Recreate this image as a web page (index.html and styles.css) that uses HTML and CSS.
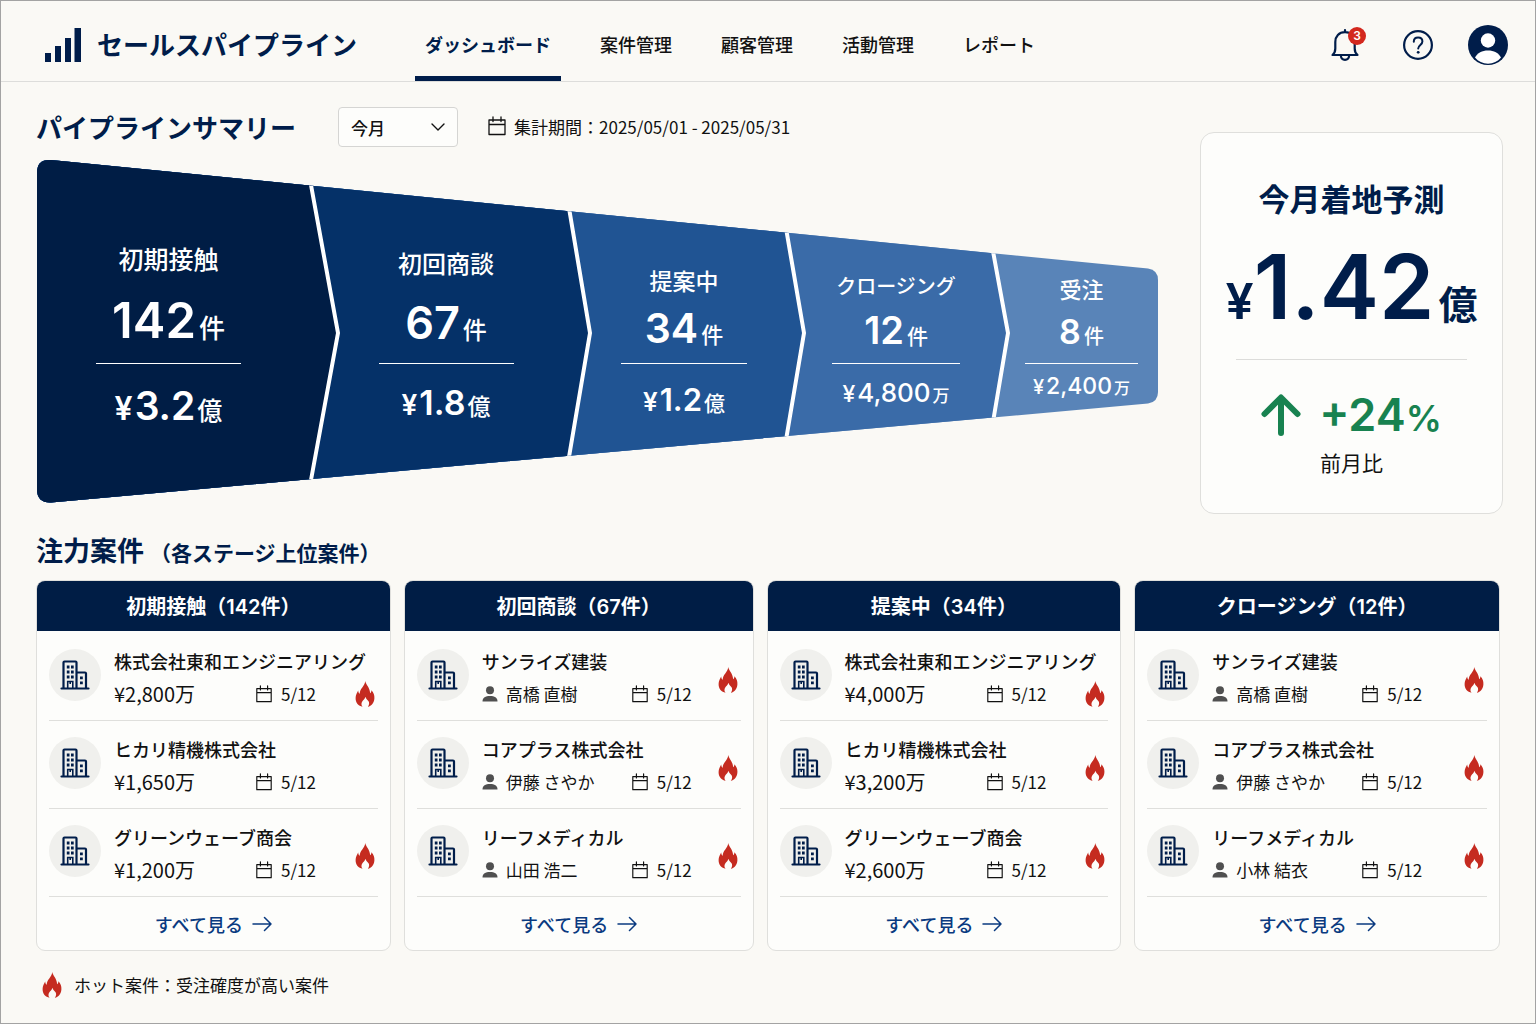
FILE: index.html
```html
<!DOCTYPE html>
<html lang="ja">

<head>
    <meta charset="UTF-8">
    <meta name="viewport" content="width=device-width, initial-scale=1.0">
    <title>セールスパイプライン</title>
    <link rel="stylesheet" href="styles.css">
</head>

<body>
    <!-- Shared icons -->
    <svg class="sprite" aria-hidden="true">
        <symbol id="icon-calendar" viewBox="0 0 20 20">
            <path d="M2 4h16v14.500H2zM2 8.500h16M6 1v4.500M14 1v4.500" fill="none" stroke="currentColor" stroke-width="1.300" stroke-linejoin="round" stroke-linecap="round" />
        </symbol>
        <symbol id="icon-person" viewBox="0 0 16 16">
            <circle cx="8" cy="4.200" r="4" fill="currentColor" />
            <path d="M.5 15.500C.5 11.500 3.500 10 8 10s7.500 1.500 7.500 5.500z" fill="currentColor" />
        </symbol>
        <symbol id="icon-building" viewBox="0 0 30 30">
            <path d="M3.500 28V2.500a1 1 0 0 1 1-1h11a1 1 0 0 1 1 1V28M16.500 12.500h8.500a1 1 0 0 1 1 1V28M1.500 28.500h27" fill="none" stroke="currentColor" stroke-width="2.200" stroke-linecap="round" />
            <path d="M6.800 5.500h2.700v3H6.800zM11 5.500h2.700v3H11zM6.800 10.500h2.700v3H6.800zM11 10.500h2.700v3H11zM6.800 15.500h2.700v3H6.800zM11 15.500h2.700v3H11zM20 16.500h2.800v2.800H20zM20 21.500h2.800v2.800H20z" fill="currentColor" />
            <path d="M7.700 28v-6.500h5.100V28M10.200 21.500V24" fill="none" stroke="currentColor" stroke-width="1.600" />
        </symbol>
        <symbol id="icon-fire" viewBox="0 0 20 26">
            <path d="M10.200 0C10.700 3.500 15 6.500 15.100 12.200c.9-.6 1.300-1.600 1.300-3 2.200 2.300 3.200 5 3 8-.3 4.800-2.800 7.600-6.600 8.600 1.400-1.600 1.700-3.600.9-5.200-.8-1.700-2.800-2.300-3.300-4.800-.4 2.200-2.300 3.200-3.300 4.900-1 1.800-.8 3.600.5 5.100C3.500 24.900.5 22 .6 17c0-3 1.400-5.200 2.600-7.500.1 1.500.5 2.600 1.500 3.200C4.700 7.500 9.800 5.500 10.200 0z" fill="currentColor" />
        </symbol>
        <symbol id="icon-arrow" viewBox="0 0 20 16">
            <path d="M1 8h18M12.500 1.500L19 8l-6.500 6.500" fill="none" stroke="currentColor" stroke-width="1.500" stroke-linecap="round" stroke-linejoin="round" />
        </symbol>
    </svg>

    <header class="header">
        <a class="brand" href="#">
            <svg class="brand-icon" viewBox="0 0 36 34" aria-hidden="true">
                <path d="M0 25h6v9H0zM10 18h6v16h-6zM20 10h6v24h-6zM29.500 0h6.500v34h-6.500z" fill="currentColor" />
            </svg>
            <span>セールスパイプライン</span>
        </a>
        <nav class="nav">
            <a class="nav-link active" href="#">ダッシュボード</a>
            <a class="nav-link" href="#">案件管理</a>
            <a class="nav-link" href="#">顧客管理</a>
            <a class="nav-link" href="#">活動管理</a>
            <a class="nav-link" href="#">レポート</a>
        </nav>
        <div class="tools">
            <button class="icon-button" type="button" aria-label="通知">
                <svg class="bell" viewBox="0 0 30 34" aria-hidden="true">
                    <path d="M2.500 27h25c-2-1.700-2.800-3.500-2.800-6.500V14c0-5.500-3.600-9.800-9.700-9.800S5.300 8.500 5.300 14v6.500c0 3-.8 4.800-2.800 6.500zM10.800 27.500c.3 2.800 2 4.300 4.200 4.300s3.900-1.500 4.200-4.300M15 4V2" fill="none" stroke="currentColor" stroke-width="2.200" stroke-linecap="round" stroke-linejoin="round" />
                </svg>
                <span class="badge">3</span>
            </button>
            <button class="icon-button" type="button" aria-label="ヘルプ">
                <svg class="help" viewBox="0 0 30 30" aria-hidden="true">
                    <circle cx="15" cy="15" r="13.900" fill="none" stroke="currentColor" stroke-width="2.200" />
                    <path d="M10.800 11.800c0-2.600 1.800-4.200 4.300-4.200s4.300 1.600 4.300 3.900c0 3.400-4.200 3.500-4.200 7.100" fill="none" stroke="currentColor" stroke-width="2" stroke-linecap="round" />
                    <circle cx="15.200" cy="22.300" r="1.400" fill="currentColor" />
                </svg>
            </button>
            <button class="icon-button" type="button" aria-label="アカウント">
                <svg class="avatar" viewBox="0 0 40 40" aria-hidden="true">
                    <circle cx="20" cy="20" r="20" fill="currentColor" />
                    <circle cx="20" cy="15.500" r="7.200" fill="#fff" />
                    <path d="M7 32.500c2.500-4.500 7-7 13-7s10.500 2.500 13 7c-3.300 4-7.700 6.200-13 6.200S10.300 36.500 7 32.500z" fill="#fff" />
                </svg>
            </button>
        </div>
    </header>

    <main class="main">
        <section class="summary">
            <div class="pipeline">
                <div class="pipeline-head">
                    <h1>パイプラインサマリー</h1>
                    <div class="select">
                        <select aria-label="期間">
                            <option>今月</option>
                            <option>先月</option>
                        </select>
                        <svg class="chevron" viewBox="0 0 14 8" aria-hidden="true">
                            <path d="M1 1l6 6 6-6" fill="none" stroke="currentColor" stroke-width="1.400" stroke-linecap="round" stroke-linejoin="round" />
                        </svg>
                    </div>
                    <p class="period">
                        <svg class="icon-period" aria-hidden="true"><use href="#icon-calendar" /></svg>
                        <span>集計期間：2025/05/01 - 2025/05/31</span>
                    </p>
                </div>

                <div class="funnel">
                    <svg class="funnel-shape" viewBox="0 0 1122 344" preserveAspectRatio="none" aria-hidden="true">
                        <clipPath id="funnel-clip">
                            <path d="M15 1L1112 109.500Q1122 111 1122 121V233Q1122 243 1112 244.500L15 343.500Q1 344 1 330V14Q1 0 15 1z" />
                        </clipPath>
                        <g clip-path="url(#funnel-clip)">
                            <path d="M0 0H1122V344H0z" fill="#5984b8" />
                            <path d="M0 0H942L957.500 95 972 174 957.500 260 943 344H0z" fill="#3a6ba8" />
                            <path d="M0 0H739L751 75 768 174 750.500 278 739 344H0z" fill="#205493" />
                            <path d="M0 0H525L533.500 52 554 174 533 298 525 344H0z" fill="#053168" />
                            <path d="M0 0H270.500L275 26 302 174 275 321 270.500 344H0z" fill="#001d45" />
                            <path d="M270.500 0L275 26 302 174 275 321 270.500 344M525 0L533.500 52 554 174 533 298 525 344M739 0L751 75 768 174 750.500 278 739 344M942 0L957.500 95 972 174 957.500 260 943 344" fill="none" stroke="#fff" stroke-width="4" />
                        </g>
                    </svg>
                    <ol class="stages">
                        <li class="stage stage-1">
                            <div class="stage-top">
                                <h2>初期接触</h2>
                                <p class="count">142<small>件</small></p>
                            </div>
                            <p class="amount"><i>¥</i>3.2<small>億</small></p>
                        </li>
                        <li class="stage stage-2">
                            <div class="stage-top">
                                <h2>初回商談</h2>
                                <p class="count">67<small>件</small></p>
                            </div>
                            <p class="amount"><i>¥</i>1.8<small>億</small></p>
                        </li>
                        <li class="stage stage-3">
                            <div class="stage-top">
                                <h2>提案中</h2>
                                <p class="count">34<small>件</small></p>
                            </div>
                            <p class="amount"><i>¥</i>1.2<small>億</small></p>
                        </li>
                        <li class="stage stage-4">
                            <div class="stage-top">
                                <h2>クロージング</h2>
                                <p class="count">12<small>件</small></p>
                            </div>
                            <p class="amount"><i>¥</i>4,800<small>万</small></p>
                        </li>
                        <li class="stage stage-5">
                            <div class="stage-top">
                                <h2>受注</h2>
                                <p class="count">8<small>件</small></p>
                            </div>
                            <p class="amount"><i>¥</i>2,400<small>万</small></p>
                        </li>
                    </ol>
                </div>
            </div>

            <aside class="forecast">
                <h2>今月着地予測</h2>
                <p class="forecast-value"><i>¥</i>1.42<small>億</small></p>
                <hr>
                <p class="trend">
                    <svg class="trend-arrow" viewBox="0 0 40 42" aria-hidden="true">
                        <path d="M20 39V4M3.500 20L20 3.500 36.500 20" fill="none" stroke="currentColor" stroke-width="6" stroke-linecap="round" stroke-linejoin="round" />
                    </svg>
                    <span>+24<small>%</small></span>
                </p>
                <p class="trend-label">前月比</p>
            </aside>
        </section>

        <section class="focus">
            <h2 class="focus-title">注力案件<small>（各ステージ上位案件）</small></h2>

            <div class="cards">
                <article class="card">
                    <h3>初期接触（142件）</h3>
                    <ul class="deals">
                        <li class="deal deal-long">
                            <span class="deal-icon"><svg aria-hidden="true"><use href="#icon-building" /></svg></span>
                            <div class="deal-body">
                                <h4>株式会社東和エンジニアリング</h4>
                                <div class="deal-meta">
                                    <span class="price">¥2,800万</span>
                                    <span class="date"><svg aria-hidden="true"><use href="#icon-calendar" /></svg>5/12</span>
                                </div>
                            </div>
                            <svg class="fire" aria-label="ホット案件"><use href="#icon-fire" /></svg>
                        </li>
                        <li class="deal">
                            <span class="deal-icon"><svg aria-hidden="true"><use href="#icon-building" /></svg></span>
                            <div class="deal-body">
                                <h4>ヒカリ精機株式会社</h4>
                                <div class="deal-meta">
                                    <span class="price">¥1,650万</span>
                                    <span class="date"><svg aria-hidden="true"><use href="#icon-calendar" /></svg>5/12</span>
                                </div>
                            </div>
                        </li>
                        <li class="deal">
                            <span class="deal-icon"><svg aria-hidden="true"><use href="#icon-building" /></svg></span>
                            <div class="deal-body">
                                <h4>グリーンウェーブ商会</h4>
                                <div class="deal-meta">
                                    <span class="price">¥1,200万</span>
                                    <span class="date"><svg aria-hidden="true"><use href="#icon-calendar" /></svg>5/12</span>
                                </div>
                            </div>
                            <svg class="fire" aria-label="ホット案件"><use href="#icon-fire" /></svg>
                        </li>
                    </ul>
                    <a class="more" href="#">すべて見る<svg aria-hidden="true"><use href="#icon-arrow" /></svg></a>
                </article>

                <article class="card card-people">
                    <h3>初回商談（67件）</h3>
                    <ul class="deals">
                        <li class="deal">
                            <span class="deal-icon"><svg aria-hidden="true"><use href="#icon-building" /></svg></span>
                            <div class="deal-body">
                                <h4>サンライズ建装</h4>
                                <div class="deal-meta">
                                    <span class="person"><svg aria-hidden="true"><use href="#icon-person" /></svg>高橋 直樹</span>
                                    <span class="date"><svg aria-hidden="true"><use href="#icon-calendar" /></svg>5/12</span>
                                </div>
                            </div>
                            <svg class="fire" aria-label="ホット案件"><use href="#icon-fire" /></svg>
                        </li>
                        <li class="deal">
                            <span class="deal-icon"><svg aria-hidden="true"><use href="#icon-building" /></svg></span>
                            <div class="deal-body">
                                <h4>コアプラス株式会社</h4>
                                <div class="deal-meta">
                                    <span class="person"><svg aria-hidden="true"><use href="#icon-person" /></svg>伊藤 さやか</span>
                                    <span class="date"><svg aria-hidden="true"><use href="#icon-calendar" /></svg>5/12</span>
                                </div>
                            </div>
                            <svg class="fire" aria-label="ホット案件"><use href="#icon-fire" /></svg>
                        </li>
                        <li class="deal">
                            <span class="deal-icon"><svg aria-hidden="true"><use href="#icon-building" /></svg></span>
                            <div class="deal-body">
                                <h4>リーフメディカル</h4>
                                <div class="deal-meta">
                                    <span class="person"><svg aria-hidden="true"><use href="#icon-person" /></svg>山田 浩二</span>
                                    <span class="date"><svg aria-hidden="true"><use href="#icon-calendar" /></svg>5/12</span>
                                </div>
                            </div>
                            <svg class="fire" aria-label="ホット案件"><use href="#icon-fire" /></svg>
                        </li>
                    </ul>
                    <a class="more" href="#">すべて見る<svg aria-hidden="true"><use href="#icon-arrow" /></svg></a>
                </article>

                <article class="card">
                    <h3>提案中（34件）</h3>
                    <ul class="deals">
                        <li class="deal deal-long">
                            <span class="deal-icon"><svg aria-hidden="true"><use href="#icon-building" /></svg></span>
                            <div class="deal-body">
                                <h4>株式会社東和エンジニアリング</h4>
                                <div class="deal-meta">
                                    <span class="price">¥4,000万</span>
                                    <span class="date"><svg aria-hidden="true"><use href="#icon-calendar" /></svg>5/12</span>
                                </div>
                            </div>
                            <svg class="fire" aria-label="ホット案件"><use href="#icon-fire" /></svg>
                        </li>
                        <li class="deal">
                            <span class="deal-icon"><svg aria-hidden="true"><use href="#icon-building" /></svg></span>
                            <div class="deal-body">
                                <h4>ヒカリ精機株式会社</h4>
                                <div class="deal-meta">
                                    <span class="price">¥3,200万</span>
                                    <span class="date"><svg aria-hidden="true"><use href="#icon-calendar" /></svg>5/12</span>
                                </div>
                            </div>
                            <svg class="fire" aria-label="ホット案件"><use href="#icon-fire" /></svg>
                        </li>
                        <li class="deal">
                            <span class="deal-icon"><svg aria-hidden="true"><use href="#icon-building" /></svg></span>
                            <div class="deal-body">
                                <h4>グリーンウェーブ商会</h4>
                                <div class="deal-meta">
                                    <span class="price">¥2,600万</span>
                                    <span class="date"><svg aria-hidden="true"><use href="#icon-calendar" /></svg>5/12</span>
                                </div>
                            </div>
                            <svg class="fire" aria-label="ホット案件"><use href="#icon-fire" /></svg>
                        </li>
                    </ul>
                    <a class="more" href="#">すべて見る<svg aria-hidden="true"><use href="#icon-arrow" /></svg></a>
                </article>

                <article class="card card-people">
                    <h3>クロージング（12件）</h3>
                    <ul class="deals">
                        <li class="deal">
                            <span class="deal-icon"><svg aria-hidden="true"><use href="#icon-building" /></svg></span>
                            <div class="deal-body">
                                <h4>サンライズ建装</h4>
                                <div class="deal-meta">
                                    <span class="person"><svg aria-hidden="true"><use href="#icon-person" /></svg>高橋 直樹</span>
                                    <span class="date"><svg aria-hidden="true"><use href="#icon-calendar" /></svg>5/12</span>
                                </div>
                            </div>
                            <svg class="fire" aria-label="ホット案件"><use href="#icon-fire" /></svg>
                        </li>
                        <li class="deal">
                            <span class="deal-icon"><svg aria-hidden="true"><use href="#icon-building" /></svg></span>
                            <div class="deal-body">
                                <h4>コアプラス株式会社</h4>
                                <div class="deal-meta">
                                    <span class="person"><svg aria-hidden="true"><use href="#icon-person" /></svg>伊藤 さやか</span>
                                    <span class="date"><svg aria-hidden="true"><use href="#icon-calendar" /></svg>5/12</span>
                                </div>
                            </div>
                            <svg class="fire" aria-label="ホット案件"><use href="#icon-fire" /></svg>
                        </li>
                        <li class="deal">
                            <span class="deal-icon"><svg aria-hidden="true"><use href="#icon-building" /></svg></span>
                            <div class="deal-body">
                                <h4>リーフメディカル</h4>
                                <div class="deal-meta">
                                    <span class="person"><svg aria-hidden="true"><use href="#icon-person" /></svg>小林 結衣</span>
                                    <span class="date"><svg aria-hidden="true"><use href="#icon-calendar" /></svg>5/12</span>
                                </div>
                            </div>
                            <svg class="fire" aria-label="ホット案件"><use href="#icon-fire" /></svg>
                        </li>
                    </ul>
                    <a class="more" href="#">すべて見る<svg aria-hidden="true"><use href="#icon-arrow" /></svg></a>
                </article>
            </div>

            <p class="legend">
                <svg class="fire" aria-hidden="true"><use href="#icon-fire" /></svg>
                <span>ホット案件：受注確度が高い案件</span>
            </p>
        </section>
    </main>
</body>

</html>
```
FILE: styles.css
```css
* {
    box-sizing: border-box;
    margin: 0;
    padding: 0;
}

body {
    min-height: 100vh;
    border: 1px solid #a3a3a3;
    background-color: #faf9f5;
    color: #111;
    font-family: "Noto Sans CJK JP", sans-serif;
    font-size: 17px;
}

a {
    color: inherit;
    text-decoration: none;
}

ul,
ol {
    list-style: none;
}

i {
    font-style: normal;
}

svg {
    display: block;
    flex-shrink: 0;
}

.sprite {
    display: none;
}

/* Header */
.header {
    display: flex;
    align-items: center;
    height: 81px;
    padding: 0 27px 0 44px;
    border-bottom: 1px solid #dddddb;
    color: #001d4a;
}

.brand {
    display: flex;
    align-items: center;
    gap: 16px;
    margin-top: 6px;
    font-size: 26px;
    font-weight: 600;
    line-height: 40px;
}

.brand-icon {
    width: 36px;
    height: 34px;
    margin-top: 2px;
}

.nav {
    display: flex;
    gap: 29px;
    height: 100%;
    margin-left: 58px;
}

.nav-link {
    padding: 0 10px;
    border-bottom: 5px solid transparent;
    color: #111;
    font-size: 18px;
    font-weight: 500;
    line-height: 86px;
    white-space: nowrap;
}

.nav-link.active {
    border-bottom-color: #001d4a;
    color: #001d4a;
    font-weight: 600;
}

.tools {
    display: flex;
    align-items: center;
    gap: 35px;
    margin-left: auto;
    padding-top: 7px;
}

.icon-button {
    position: relative;
    border: none;
    background: none;
    color: #001d4a;
    cursor: pointer;
}

.bell {
    width: 30px;
    height: 34px;
}

.help {
    width: 30px;
    height: 30px;
    margin-left: 8px;
}

.avatar {
    width: 40px;
    height: 40px;
}

.badge {
    position: absolute;
    top: -1px;
    right: -6px;
    width: 18px;
    height: 18px;
    border-radius: 50%;
    background-color: #d3281e;
    color: #fff;
    font: 600 12px/18px Inter, sans-serif;
    text-align: center;
}

/* Summary */
.main {
    padding: 25px 32px 20px 35px;
}

.summary {
    display: grid;
    grid-template-columns: 1fr 303px;
    gap: 42px;
    align-items: start;
}

.pipeline-head {
    display: flex;
    align-items: center;
    height: 40px;
    margin-bottom: 12px;
}

.pipeline-head h1 {
    color: #001d4a;
    font-size: 26px;
    font-weight: 600;
    line-height: 40px;
}

.select {
    display: grid;
    align-items: center;
    width: 120px;
    height: 40px;
    margin: 0 29px 0 42px;
}

.select select,
.select .chevron {
    grid-area: 1 / 1;
}

.select select {
    height: 40px;
    padding: 0 12px;
    border: 1px solid #d5d5d3;
    border-radius: 4px;
    background-color: #fdfdfb;
    color: #111;
    font: 500 17px "Noto Sans CJK JP", sans-serif;
    appearance: none;
}

.chevron {
    justify-self: end;
    width: 14px;
    height: 8px;
    margin-right: 13px;
    pointer-events: none;
}

.period {
    display: flex;
    align-items: center;
    gap: 7px;
    padding-bottom: 2px;
    white-space: nowrap;
}

.icon-period {
    width: 20px;
    height: 20px;
}

.funnel {
    display: grid;
}

.funnel-shape,
.stages {
    grid-area: 1 / 1;
    width: 100%;
    height: 344px;
}

/* columns follow the slice widths of the funnel shape */
.stages {
    display: grid;
    grid-template-columns: 275fr 258fr 218fr 206fr 165fr;
    color: #fff;
    font-family: Inter, "Noto Sans CJK JP", sans-serif;
}

.stage {
    display: flex;
    flex-direction: column;
    align-items: center;
    padding-left: 12px;
    line-height: 1;
}

.stage-top {
    display: flex;
    flex-direction: column;
    align-items: center;
    justify-content: flex-end;
    gap: 14px;
    width: 126px;
    height: 205px;
    padding-bottom: 14px;
    border-bottom: 1px solid #fff;
    white-space: nowrap;
}

.stage h2 {
    font-weight: 500;
}

.count {
    font-weight: 600;
}

.count small {
    margin-left: 3px;
    font-weight: 500;
}

.amount {
    font-weight: 600;
    white-space: nowrap;
}

.amount i {
    margin-right: 2px;
}

.amount small {
    margin-left: 2px;
    font-weight: 500;
}

.stage-1 {
    padding: 0 10px 0 0;
}

.stage-1 .stage-top {
    width: 145px;
}

.stage-2 .stage-top {
    width: 135px;
}

.stage-1 .stage-top,
.stage-2 .stage-top {
    gap: 23px;
    padding-bottom: 18px;
}

.stage-1 h2 {
    font-size: 25px;
}

.stage-1 .count {
    font-size: 49px;
}

.stage-1 .count small {
    font-size: 26px;
}

.stage-1 .amount {
    padding-top: 22px;
    font-size: 39px;
}

.stage-1 .amount i {
    font-size: 32px;
}

.stage-1 .amount small {
    font-size: 25px;
}

.stage-2 h2 {
    font-size: 24px;
}

.stage-2 .count {
    font-size: 45px;
}

.stage-2 .count small {
    font-size: 24px;
}

.stage-2 .amount {
    padding-top: 22px;
    font-size: 34px;
}

.stage-2 .amount i {
    font-size: 28px;
}

.stage-2 .amount small {
    font-size: 23px;
}

.stage-3 h2 {
    font-size: 23px;
}

.stage-3 .count {
    font-size: 41px;
}

.stage-3 .count small {
    font-size: 22px;
}

.stage-3 .amount {
    padding-top: 20px;
    font-size: 31px;
}

.stage-3 .amount i {
    font-size: 26px;
}

.stage-3 .amount small {
    font-size: 21px;
}

.stage-4 .stage-top {
    width: 128px;
}

.stage-4 h2 {
    font-size: 20px;
}

.stage-4 .count {
    font-size: 38px;
}

.stage-4 .count small {
    font-size: 21px;
}

.stage-4 .amount {
    padding-top: 16px;
    font-size: 26px;
    font-weight: 500;
}

.stage-4 .amount i {
    font-size: 23px;
}

.stage-4 .amount small {
    font-size: 17px;
}

.stage-5 .stage-top {
    width: 113px;
}

.stage-5 h2 {
    font-size: 22px;
}

.stage-5 .count {
    font-size: 34px;
}

.stage-5 .count small {
    font-size: 20px;
}

.stage-5 .amount {
    padding-top: 11px;
    font-size: 23px;
    font-weight: 500;
}

.stage-5 .amount i {
    font-size: 20px;
}

.stage-5 .amount small {
    font-size: 16px;
}

/* Forecast */
.forecast {
    margin-top: 25px;
    padding: 47px 35px 34px;
    border: 1px solid #dfdfdc;
    border-radius: 14px;
    background-color: #fdfdfb;
    color: #001d4a;
    font-family: Inter, "Noto Sans CJK JP", sans-serif;
    text-align: center;
}

.forecast h2 {
    font-size: 31px;
    font-weight: 600;
    line-height: 40px;
}

.forecast-value {
    display: flex;
    align-items: baseline;
    justify-content: center;
    margin: 20px 0 25px;
    font-size: 89px;
    font-weight: 600;
    line-height: 94px;
}

.forecast-value i {
    font-size: 50px;
    line-height: 1;
}

.forecast-value small {
    margin-left: 4px;
    font-size: 39px;
    line-height: 1;
}

.forecast hr {
    border: none;
    border-top: 1px solid #dcdcda;
}

.trend {
    display: flex;
    align-items: center;
    justify-content: center;
    gap: 18px;
    margin: 32px 0 11px;
    color: #188250;
    font-size: 45px;
    font-weight: 600;
    line-height: 46px;
}

.trend small {
    font-size: 36px;
    line-height: 1;
}

.trend-arrow {
    width: 40px;
    height: 42px;
}

.trend-label {
    color: #111;
    font-size: 21px;
    line-height: 30px;
}

/* Deals by stage */
.focus {
    padding: 16px 3px 0 0;
}

.focus-title {
    margin-bottom: 8px;
    color: #001d4a;
    font-size: 27px;
    font-weight: 600;
    line-height: 40px;
}

.focus-title small {
    margin-left: 6px;
    font-size: 21px;
}

.cards {
    display: grid;
    grid-template-columns: 355fr 350fr 355fr 366fr;
    gap: 13px;
}

.card {
    overflow: hidden;
    border: 1px solid #dfdfdc;
    border-radius: 9px;
    background-color: #fdfdfb;
}

.card h3 {
    margin: -1px -1px 0;
    padding-top: 3px;
    background-color: #001d45;
    color: #fff;
    font-family: Inter, "Noto Sans CJK JP", sans-serif;
    font-size: 20px;
    font-weight: 600;
    line-height: 48px;
    text-align: center;
}

.deals {
    padding: 2px 12px 0;
}

.deal {
    display: flex;
    align-items: center;
    height: 88px;
    padding: 12px 0 9px;
    border-bottom: 1px solid #dfdfdc;
}

.deal-icon {
    display: grid;
    flex-shrink: 0;
    place-items: center;
    width: 52px;
    height: 52px;
    margin: 0 13px 6px 0;
    border-radius: 50%;
    background-color: #f0f0ed;
    color: #001d4a;
}

.deal-icon svg {
    width: 30px;
    height: 30px;
}

.deal-body {
    flex: 1;
    min-width: 0;
    white-space: nowrap;
}

.deal h4 {
    font-size: 18px;
    font-weight: 500;
    line-height: 32px;
}

.deal-meta {
    display: grid;
    grid-template-columns: 141px 1fr;
    line-height: 34px;
}

.card-people .deal-meta {
    grid-template-columns: 149px 1fr;
}

.price {
    font-size: 20px;
}

.person,
.date {
    display: flex;
    align-items: center;
    gap: 8px;
}

.person svg {
    width: 16px;
    height: 16px;
    color: #505050;
}

.date svg {
    width: 18px;
    height: 18px;
}

.fire {
    width: 20px;
    height: 26px;
    color: #c52b20;
}

.deal .fire {
    margin: 4px 3px 0 0;
}

.deal-long .fire {
    align-self: flex-end;
    margin-bottom: 4px;
}

.more {
    display: flex;
    align-items: center;
    justify-content: center;
    gap: 9px;
    height: 53px;
    color: #0a3a80;
    font-size: 18px;
    font-weight: 500;
}

.more svg {
    width: 20px;
    height: 16px;
}

.legend {
    display: flex;
    align-items: center;
    gap: 12px;
    margin-top: 19px;
    padding-left: 6px;
    line-height: 30px;
}
```
